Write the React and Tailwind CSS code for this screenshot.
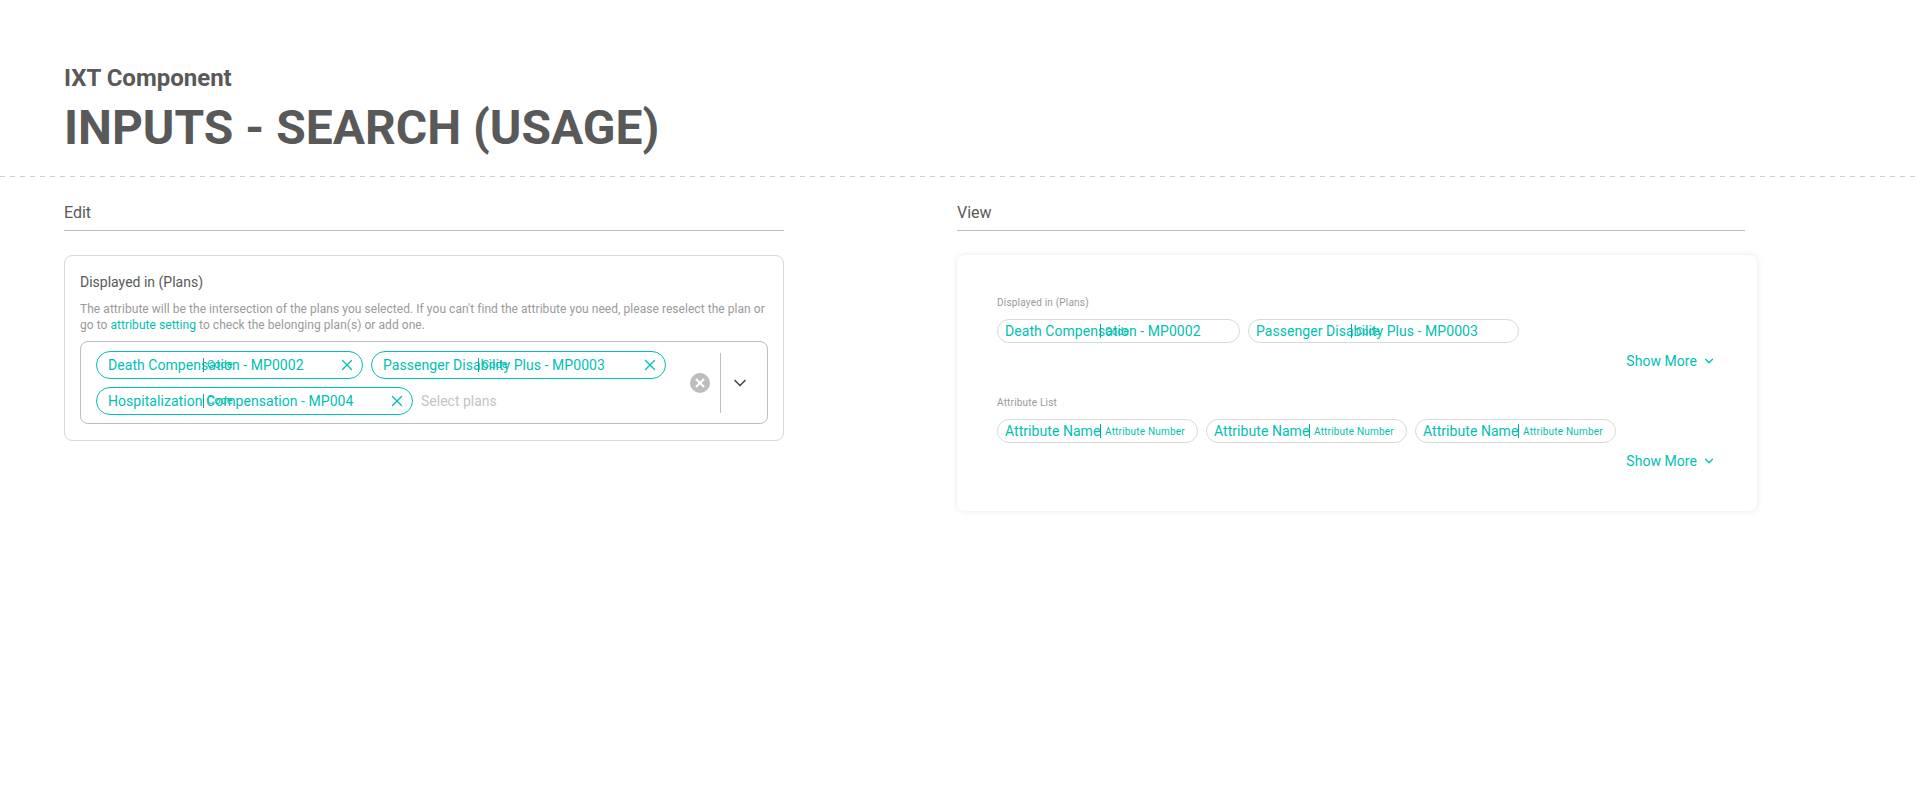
import { X, ChevronDown } from 'lucide-react';

const editChips = [
  { name: 'Death Compensation - MP0002', w: 'w-[267px]' },
  { name: 'Passenger Disability Plus - MP0003', w: 'w-[295px]' },
  { name: 'Hospitalization Compensation - MP004', w: 'w-[317px]' },
];

function EditChip({ name, w }) {
  return (
    <div className={`relative flex h-[28px] shrink-0 items-center rounded-full border border-[#00bfb3] pl-[11px] text-[14px] tracking-[0.05px] text-[#00bfb3] ${w}`}>
      <span className="whitespace-nowrap">{name}</span>
      <span className="absolute top-[6px] left-[106px] h-[14px] w-px bg-[#00a89e]" />
      <span className="absolute left-[110px] text-[11px]">Code</span>
      <X size={18} strokeWidth={1.75} className="absolute top-[4px] right-[6px]" />
    </div>
  );
}

function ViewChip({ name, small, w }) {
  return (
    <div className={`relative flex h-[24px] shrink-0 items-center rounded-full border border-[#d9d9d9] pl-[7px] text-[14px] tracking-[0.05px] text-[#00bfb3] ${w}`}>
      <span className="whitespace-nowrap">{name}</span>
      <span className="absolute top-[4px] left-[102px] h-[14px] w-px bg-[#00a89e]" />
      <span className="absolute left-[107px] whitespace-nowrap text-[10px] tracking-[0.2px]">{small}</span>
    </div>
  );
}

function ShowMore() {
  return (
    <div className="mt-[8px] flex h-[20px] items-center justify-end gap-[5px] pr-px text-[14px] tracking-[0.05px] text-[#00bfb3]">
      Show More
      <ChevronDown size={14} strokeWidth={2.25} />
    </div>
  );
}

export default function App() {
  return (
    <div className="min-h-[800px] bg-white font-['Roboto',sans-serif] text-[#595959]">
      <div className="h-[176px] px-[64px] pt-[63px]">
        <div className="text-[24px] leading-[30px] font-bold">IXT Component</div>
        <div className="mt-[7px] text-[48px] leading-[56px] font-bold">INPUTS - SEARCH (USAGE)</div>
      </div>
      <div className="h-px bg-[repeating-linear-gradient(to_right,#cfcfcf_0,#cfcfcf_5px,transparent_5px,transparent_10px)]" />

      <div className="flex pt-[24px] pl-[64px]">
        <section className="w-[720px]">
          <div className="h-[30px] border-b border-[#bdbdbd] text-[16px] leading-[24px]">Edit</div>
          <div className="mt-[24px] h-[186px] rounded-[8px] border border-[#d9d9d9] px-[15px] pt-[16px]">
            <div className="text-[14px] leading-[20px]">Displayed in (Plans)</div>
            <p className="mt-[9px] text-[12px] leading-[16px] tracking-[0.05px] whitespace-nowrap text-[#9a9a9a]">
              The attribute will be the intersection of the plans you selected. If you can't find the attribute you need, please reselect the plan or
              <br />
              go to <span className="text-[#00bfb3]">attribute setting</span> to check the belonging plan(s) or add one.
            </p>
            <div className="mt-[8px] flex h-[83px] rounded-[8px] border border-[#bdbdbd] pt-[9px] pl-[15px]">
              <div className="flex w-[594px] flex-wrap content-start gap-[8px]">
                {editChips.map((c) => (
                  <EditChip key={c.name} {...c} />
                ))}
                <span className="flex h-[28px] items-center text-[14px] text-[#c4c4c4]">Select plans</span>
              </div>
              <div className="-mt-[9px] flex items-center">
                <span className="flex h-[20px] w-[20px] items-center justify-center rounded-full bg-[#bdbdbd] text-white">
                  <X size={14} strokeWidth={3.5} />
                </span>
                <span className="mr-[9px] ml-[10px] h-[60px] w-px bg-[#bdbdbd]" />
                <ChevronDown size={20} strokeWidth={2} className="text-[#4a4a4a]" />
              </div>
            </div>
          </div>
        </section>

        <section className="ml-[173px] w-[800px]">
          <div className="mr-[12px] h-[30px] border-b border-[#bdbdbd] text-[16px] leading-[24px]">View</div>
          <div className="mt-[24px] h-[256px] rounded-[8px] bg-white pt-[41px] pr-[40px] pl-[40px] shadow-[0_0_6px_rgba(0,0,0,0.1)]">
            <div className="text-[10px] leading-[14px] tracking-[0.2px] text-[#9a9a9a]">Displayed in (Plans)</div>
            <div className="mt-[9px] flex gap-[8px]">
              <ViewChip name="Death Compensation - MP0002" small="Code" w="w-[243px]" />
              <ViewChip name="Passenger Disability Plus - MP0003" small="Code" w="w-[271px]" />
            </div>
            <ShowMore />
            <div className="mt-[25px] text-[10px] leading-[14px] tracking-[0.2px] text-[#9a9a9a]">Attribute List</div>
            <div className="mt-[9px] flex gap-[8px]">
              {[0, 1, 2].map((i) => (
                <ViewChip key={i} name="Attribute Name" small="Attribute Number" w="w-[201px]" />
              ))}
            </div>
            <ShowMore />
          </div>
        </section>
      </div>
    </div>
  );
}
